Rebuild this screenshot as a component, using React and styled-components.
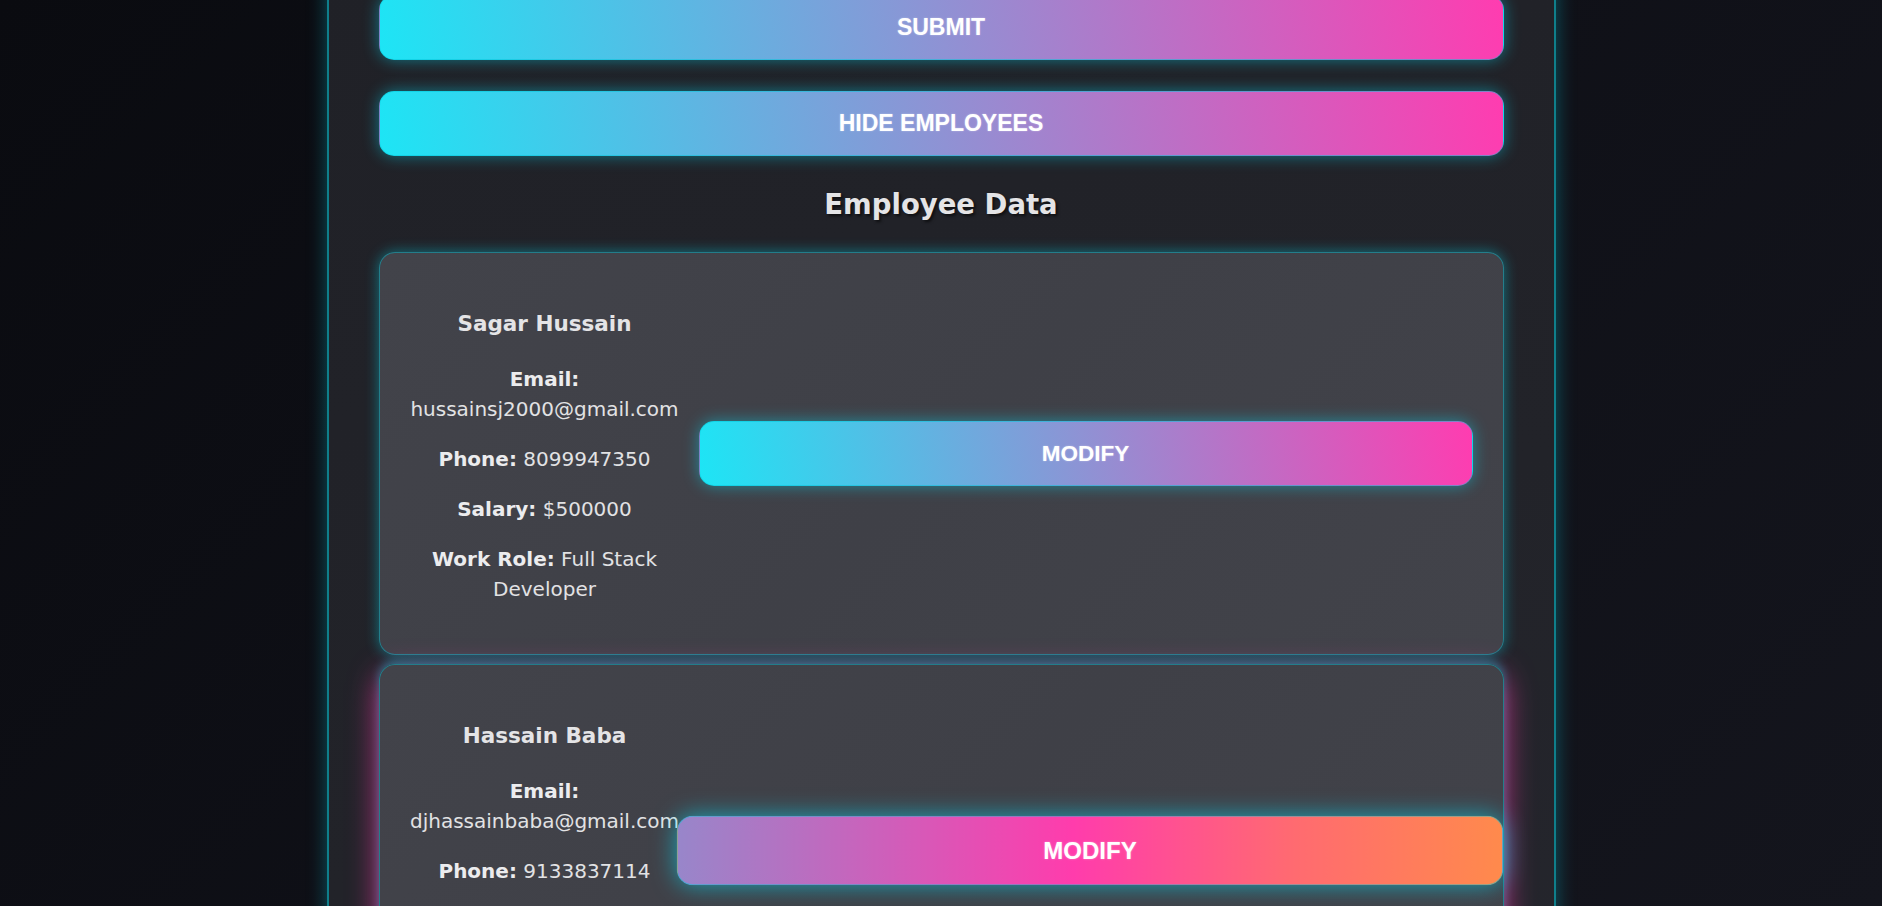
import React from 'react';
import styled, { createGlobalStyle } from 'styled-components';

const employees = [
    {
        name: 'Sagar Hussain',
        email: 'hussainsj2000@gmail.com',
        phone: '8099947350',
        salary: '$500000',
        role: 'Full Stack Developer',
    },
    {
        name: 'Hassain Baba',
        email: 'djhassainbaba@gmail.com',
        phone: '9133837114',
        salary: '$300000',
        role: 'DJ Artist',
        hovered: true,
    },
];

const App = () => {
    return (
        <>
            <GlobalStyle />
            <Page>
                <Panel>
                    <GlowButton type="button">Submit</GlowButton>
                    <GlowButton type="button">Hide Employees</GlowButton>

                    <Title>Employee Data</Title>

                    <CardList>
                        {employees.map((emp, index) => (
                            <EmployeeCard key={index} $hovered={emp.hovered}>
                                <Info>
                                    <Name>{emp.name}</Name>
                                    <Field><b>Email:</b> {emp.email}</Field>
                                    <Field><b>Phone:</b> {emp.phone}</Field>
                                    <Field><b>Salary:</b> {emp.salary}</Field>
                                    <Field><b>Work Role:</b> {emp.role}</Field>
                                </Info>
                                <ModifyButton type="button" $hovered={emp.hovered}>Modify</ModifyButton>
                            </EmployeeCard>
                        ))}
                    </CardList>
                </Panel>
            </Page>
        </>
    );
}

export default App;

const GlobalStyle = createGlobalStyle`
    html, body {
        margin: 0;
        padding: 0;
        height: 100%;
        overflow: hidden;
    }

    body {
        background: linear-gradient(135deg, #0a0b10 0%, #0f1017 50%, #14151d 100%);
        font-family: "DejaVu Sans", "Open Sans", sans-serif;
    }
`;

const Page = styled.div`
    min-height: 100vh;
    display: flex;
    justify-content: center;
`;

const Panel = styled.div`
    width: 1229px;
    margin-top: -40px;
    padding: 35px 50px 40px;
    box-sizing: border-box;
    background: linear-gradient(160deg, #202127 0%, #222329 60%, #25262d 100%);
    border-left: 2px solid #0f7f8b;
    border-right: 2px solid #0f7f8b;
    box-shadow: 0 0 18px rgba(0, 220, 240, 0.35);
    display: flex;
    flex-direction: column;
`;

const GlowButton = styled.button`
    height: 65px;
    margin-bottom: 31px;
    border: 1px solid rgba(0, 200, 220, 0.5);
    border-radius: 15px;
    background: linear-gradient(80deg, #1de5f5 0%, #8f92d4 50%, #ff3cb0 100%);
    color: #fff;
    font-family: "Liberation Sans", Arial, sans-serif;
    font-weight: bold;
    font-size: 23px;
    text-transform: uppercase;
    text-shadow: 0 0 2px rgba(255, 255, 255, 0.4);
    box-shadow: 0 0 16px rgba(0, 229, 255, 0.45);
    cursor: pointer;

    &:nth-of-type(2) {
        margin-bottom: 0;
    }
`;

const Title = styled.h2`
    margin: 30px 0;
    line-height: 36px;
    text-align: center;
    font-size: 27.5px;
    font-weight: bold;
    color: #e4e4e6;
    text-shadow: 2px 2px 3px rgba(0, 0, 0, 0.6);
`;

const CardList = styled.div`
    display: flex;
    flex-direction: column;
    gap: 9px;
`;

const EmployeeCard = styled.div`
    display: flex;
    align-items: center;
    gap: 19px;
    padding: 30px;
    border-radius: 16px;
    background: linear-gradient(135deg, #42434a 0%, #3f4047 50%, #42434a 100%);
    border: 1px solid rgba(0, 200, 220, 0.45);
    box-shadow: ${({ $hovered }) => $hovered
        ? '0 10px 30px rgba(255, 60, 172, 0.75), 0 -3px 10px rgba(0, 220, 240, 0.45)'
        : '0 0 14px rgba(0, 220, 240, 0.45)'};
`;

const Info = styled.div`
    flex: 0 0 270px;
    width: 270px;
    text-align: center;
    color: #e2e2e4;
`;

const Name = styled.h3`
    margin: 26px 0 25px;
    line-height: 30px;
    font-size: 21.5px;
    font-weight: bold;
    color: #e4e4e6;
`;

const Field = styled.p`
    margin: 0 0 20px;
    line-height: 30px;
    font-size: 20px;

    b {
        font-weight: bold;
        color: #ececee;
    }
`;

const ModifyButton = styled.button`
    flex: 1;
    height: 65px;
    border: 1px solid rgba(0, 200, 220, 0.5);
    border-radius: 15px;
    color: #fff;
    font-family: "Liberation Sans", Arial, sans-serif;
    font-weight: bold;
    font-size: 22.5px;
    text-transform: uppercase;
    text-shadow: 0 0 2px rgba(255, 255, 255, 0.4);
    cursor: pointer;
    position: relative;
    background: ${({ $hovered }) => $hovered
        ? 'linear-gradient(90deg, #9886ca 0%, #ff3cac 48%, #ff6b70 75%, #ff8a4c 100%)'
        : 'linear-gradient(80deg, #1de5f5 0%, #8f92d4 50%, #ff3cb0 100%)'};
    transform: ${({ $hovered }) => ($hovered ? 'translateX(4px) scale(1.068)' : 'none')};
    box-shadow: ${({ $hovered }) => $hovered
        ? '0 0 22px rgba(0, 229, 255, 0.6)'
        : '0 0 16px rgba(0, 229, 255, 0.45)'};
`;
